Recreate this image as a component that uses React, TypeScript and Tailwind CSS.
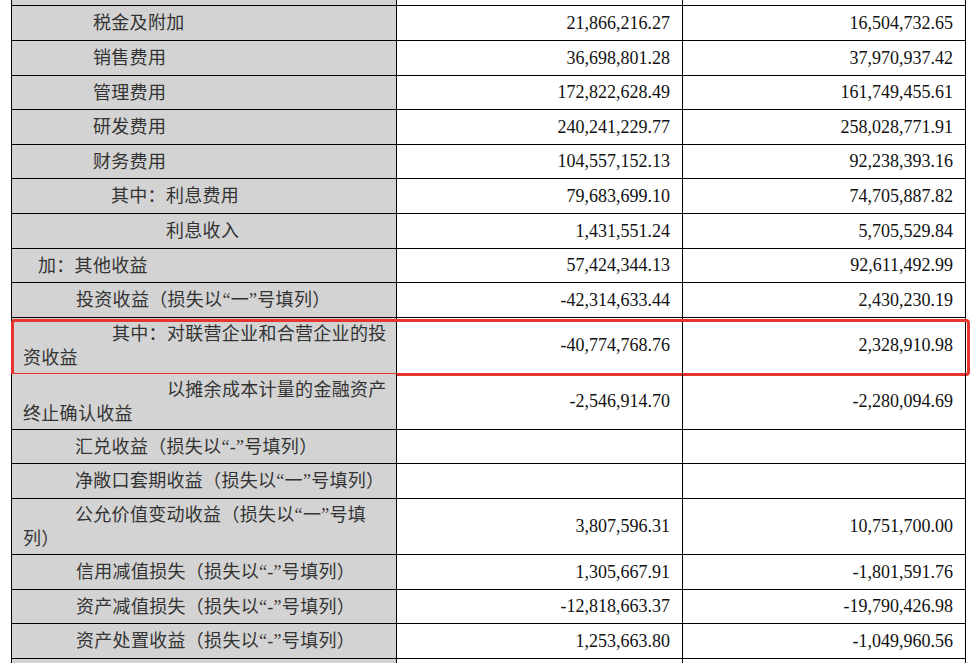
type Row = {
  label: string[];
  indent: string;
  a: string;
  b: string;
  h: string;
  mark?: boolean;
};

const rows: Row[] = [
  { label: ["税金及附加"], indent: "indent-[70px]", a: "21,866,216.27", b: "16,504,732.65", h: "h-[35px]" },
  { label: ["销售费用"], indent: "indent-[70px]", a: "36,698,801.28", b: "37,970,937.42", h: "h-[35px]" },
  { label: ["管理费用"], indent: "indent-[70px]", a: "172,822,628.49", b: "161,749,455.61", h: "h-[34px]" },
  { label: ["研发费用"], indent: "indent-[70px]", a: "240,241,229.77", b: "258,028,771.91", h: "h-[35px]" },
  { label: ["财务费用"], indent: "indent-[70px]", a: "104,557,152.13", b: "92,238,393.16", h: "h-[34px]" },
  { label: ["其中：利息费用"], indent: "indent-[88px]", a: "79,683,699.10", b: "74,705,887.82", h: "h-[35px]" },
  { label: ["利息收入"], indent: "indent-[143px]", a: "1,431,551.24", b: "5,705,529.84", h: "h-[35px]" },
  { label: ["加：其他收益"], indent: "indent-[15px]", a: "57,424,344.13", b: "92,611,492.99", h: "h-[34px]" },
  { label: ["投资收益（损失以“一”号填列）"], indent: "indent-[53px]", a: "-42,314,633.44", b: "2,430,230.19", h: "h-[35px]" },
  {
    label: ["其中：对联营企业和合营企业的投", "资收益"],
    indent: "indent-[89px]",
    a: "-40,774,768.76",
    b: "2,328,910.98",
    h: "h-[56px]",
    mark: true,
  },
  {
    label: ["以摊余成本计量的金融资产", "终止确认收益"],
    indent: "indent-[144px]",
    a: "-2,546,914.70",
    b: "-2,280,094.69",
    h: "h-[56px]",
  },
  { label: ["汇兑收益（损失以“-”号填列）"], indent: "indent-[52px]", a: "", b: "", h: "h-[34px]" },
  { label: ["净敞口套期收益（损失以“一”号填列）"], indent: "indent-[52px]", a: "", b: "", h: "h-[35px]" },
  {
    label: ["公允价值变动收益（损失以“一”号填", "列）"],
    indent: "indent-[52px]",
    a: "3,807,596.31",
    b: "10,751,700.00",
    h: "h-[56px]",
  },
  { label: ["信用减值损失（损失以“-”号填列）"], indent: "indent-[53px]", a: "1,305,667.91", b: "-1,801,591.76", h: "h-[35px]" },
  { label: ["资产减值损失（损失以“-”号填列）"], indent: "indent-[53px]", a: "-12,818,663.37", b: "-19,790,426.98", h: "h-[34px]" },
  { label: ["资产处置收益（损失以“-”号填列）"], indent: "indent-[53px]", a: "1,253,663.80", b: "-1,049,960.56", h: "h-[35px]" },
];

function Line({ h, children, mark }: { h: string; children?: React.ReactNode; mark?: boolean }) {
  return (
    <div className={`relative flex ${h} border-b border-black`}>
      {children}
      {/* highlight frame drawn over the row */}
      {mark && (
        <div className="pointer-events-none absolute left-[-1px] right-[-4px] top-[1px] h-[57px] rounded-[4px] border-[3px] border-[#e8342e]" />
      )}
    </div>
  );
}

export default function App() {
  return (
    <div
      className="h-[663px] w-[974px] overflow-hidden bg-white"
      style={{ fontFamily: '"Liberation Serif", "Noto Sans CJK SC", serif' }}
    >
      <div className="ml-[11px] w-[955px] border-l border-black">
        <Line h="h-[6px]">
          <div className="w-[385px] border-r border-black bg-[#d3d3d3]" />
          <div className="w-[286px] border-r border-black" />
          <div className="w-[283px] border-r border-black" />
        </Line>
        {rows.map((r, i) => (
          <Line key={i} h={r.h} mark={r.mark}>
            <div className="flex w-[385px] items-center border-r border-black bg-[#d3d3d3] pl-[11px] pr-[4px]">
              <div className={`w-full whitespace-nowrap text-[18px] leading-[24px] tracking-[0.3px] text-[#333] ${r.indent}`}>
                {r.label.map((t, j) => (
                  <div key={j} className={j > 0 ? "indent-0" : ""}>
                    {t}
                  </div>
                ))}
              </div>
            </div>
            <div className="flex w-[286px] items-center justify-end border-r border-black pr-[12px] text-[18px] text-[#111]">
              {r.a}
            </div>
            <div className="flex w-[283px] items-center justify-end border-r border-black pr-[12px] text-[18px] text-[#111]">
              {r.b}
            </div>
          </Line>
        ))}
        <Line h="h-[30px]">
          <div className="w-[385px] border-r border-black bg-[#d3d3d3]" />
          <div className="w-[286px] border-r border-black" />
          <div className="w-[283px] border-r border-black" />
        </Line>
      </div>
    </div>
  );
}
